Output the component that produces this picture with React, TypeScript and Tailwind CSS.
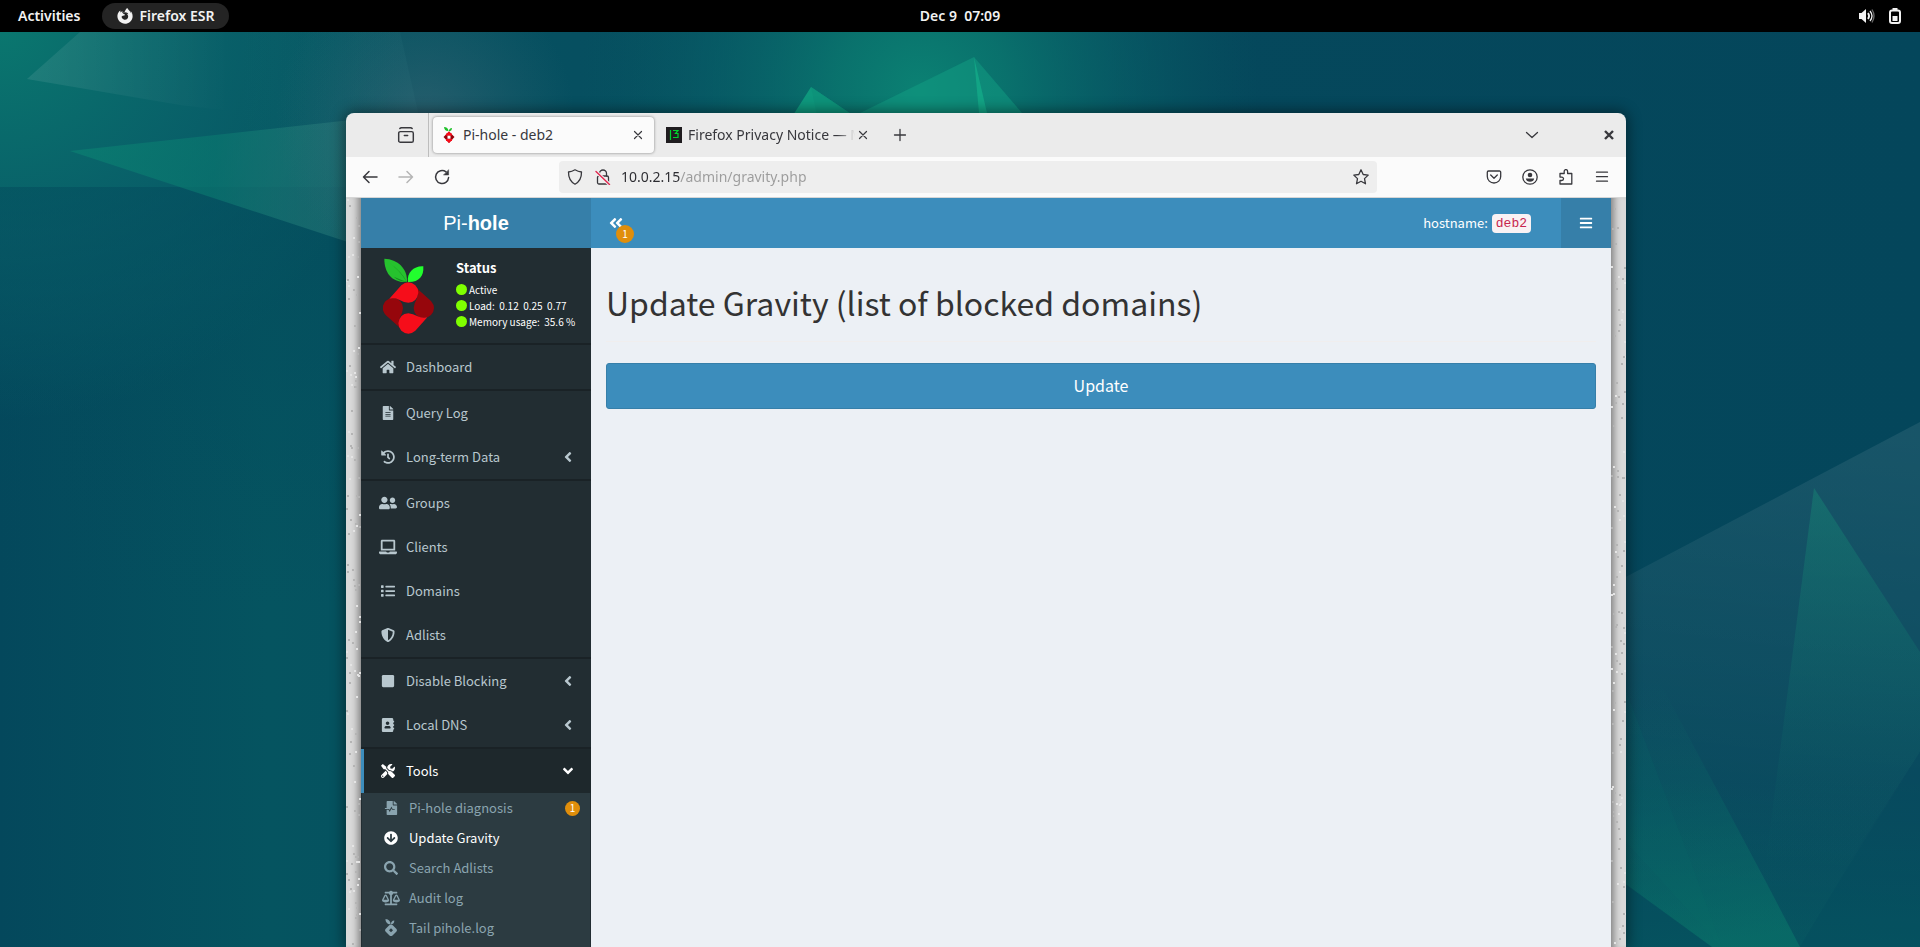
import type { ReactNode } from "react";
import {
  FaAddressBook,
  FaAngleDoubleLeft,
  FaAngleDown,
  FaAngleLeft,
  FaArrowCircleDown,
  FaBalanceScale,
  FaBars,
  FaFileAlt,
  FaFileMedicalAlt,
  FaFirefoxBrowser,
  FaHistory,
  FaHome,
  FaLaptop,
  FaList,
  FaSearch,
  FaShieldAlt,
  FaSquare,
  FaTools,
  FaUserFriends,
} from "react-icons/fa";

const LOBE =
  "M147 174 L183 134 Q204 116 225 134 Q234 143 234 156 Q230 185 204 186 Q190 185 176 177 Q163 171 147 174Z";

function Wallpaper() {
  return (
    <svg
      className="absolute inset-0 h-full w-full"
      viewBox="0 0 1920 947"
      preserveAspectRatio="xMidYMid slice"
      aria-hidden="true"
    >
      <defs>
        <linearGradient id="base" x1="0" x2="1" y1="0" y2="0">
          <stop offset="0" stopColor="#04485c" />
          <stop offset=".14" stopColor="#055460" />
          <stop offset=".3" stopColor="#064f60" />
          <stop offset=".62" stopColor="#05485c" />
          <stop offset="1" stopColor="#04465b" />
        </linearGradient>
        <radialGradient id="corner" gradientUnits="userSpaceOnUse" cx="0" cy="20" r="400">
          <stop offset="0" stopColor="#0a786f" />
          <stop offset=".55" stopColor="#09626a" stopOpacity=".85" />
          <stop offset="1" stopColor="#09606a" stopOpacity="0" />
        </radialGradient>
        <radialGradient id="glow" gradientUnits="userSpaceOnUse" cx="920" cy="90" r="340">
          <stop offset="0" stopColor="#0b8173" />
          <stop offset=".25" stopColor="#0a786f" stopOpacity=".85" />
          <stop offset=".65" stopColor="#08656a" stopOpacity=".45" />
          <stop offset="1" stopColor="#075a62" stopOpacity="0" />
        </radialGradient>
        <radialGradient id="haze" gradientUnits="userSpaceOnUse" cx="425" cy="120" r="150">
          <stop offset="0" stopColor="#5a7080" stopOpacity=".4" />
          <stop offset="1" stopColor="#40707c" stopOpacity="0" />
        </radialGradient>
        <linearGradient id="shard" gradientUnits="userSpaceOnUse" x1="27" y1="60" x2="230" y2="60">
          <stop offset="0" stopColor="#fff" stopOpacity=".09" />
          <stop offset="1" stopColor="#fff" stopOpacity="0" />
        </linearGradient>
        <linearGradient id="ray" gradientUnits="userSpaceOnUse" x1="240" y1="60" x2="410" y2="60">
          <stop offset="0" stopColor="#2a7c84" stopOpacity="0" />
          <stop offset="1" stopColor="#2a7c84" stopOpacity=".14" />
        </linearGradient>
        <linearGradient id="beam" gradientUnits="userSpaceOnUse" x1="70" y1="150" x2="360" y2="180">
          <stop offset="0" stopColor="#0b8072" stopOpacity=".7" />
          <stop offset=".5" stopColor="#0a7a70" stopOpacity=".6" />
          <stop offset="1" stopColor="#3a8a84" stopOpacity=".36" />
        </linearGradient>
        <linearGradient id="floor" x1="0" x2="0" y1="0" y2="1">
          <stop offset="0" stopColor="#034a5c" stopOpacity=".5" />
          <stop offset="1" stopColor="#034a5c" stopOpacity="0" />
        </linearGradient>
        <linearGradient id="veil" gradientUnits="userSpaceOnUse" x1="1840" y1="430" x2="1780" y2="947">
          <stop offset="0" stopColor="#fff" stopOpacity=".08" />
          <stop offset="1" stopColor="#fff" stopOpacity="0" />
        </linearGradient>
        <linearGradient id="spire" gradientUnits="userSpaceOnUse" x1="1814" y1="488" x2="1800" y2="870">
          <stop offset="0" stopColor="#178474" stopOpacity=".5" />
          <stop offset="1" stopColor="#0b6b68" stopOpacity="0" />
        </linearGradient>
        <linearGradient id="rise" gradientUnits="userSpaceOnUse" x1="1700" y1="947" x2="1650" y2="680">
          <stop offset="0" stopColor="#0a7d6c" stopOpacity=".5" />
          <stop offset="1" stopColor="#0a6b68" stopOpacity="0" />
        </linearGradient>
        <linearGradient id="ground" gradientUnits="userSpaceOnUse" x1="0" y1="947" x2="0" y2="780">
          <stop offset="0" stopColor="#0a6b68" stopOpacity=".4" />
          <stop offset="1" stopColor="#0a6b68" stopOpacity="0" />
        </linearGradient>
      </defs>
      <rect width="1920" height="947" fill="url(#base)" />
      <rect width="420" height="430" fill="url(#corner)" />
      <rect y="187" width="346" height="420" fill="url(#floor)" />
      <rect x="570" width="700" height="440" fill="url(#glow)" />
      <path d="M27 79 80 32H240V112L180 105Z" fill="url(#shard)" />
      <path d="M70 151 360 119V246Z" fill="url(#beam)" />
      <path d="M240 32H400L422 130H240Z" fill="url(#ray)" />
      <rect x="270" width="320" height="270" fill="url(#haze)" />
      <path d="M860 113 974 57 1022 113Z" fill="#12a083" opacity=".5" />
      <path d="M974 57 979 113H987Z" fill="#16b58d" opacity=".6" />
      <path d="M790 120 811 87 860 120Z" fill="#0fa080" opacity=".85" />
      <path d="M811 87 818 120H860Z" fill="#0d8f78" opacity=".6" />
      <path d="M1620 580 1920 422V947H1620Z" fill="url(#veil)" />
      <path d="M1814 488 1920 652V752L1840 875H1764Z" fill="url(#spire)" />
      <path d="M1620 780H1920V947H1620Z" fill="url(#ground)" />
      <path d="M1920 752 1840 880 1800 947H1920Z" fill="#044a5c" opacity=".3" />
      <path d="M1620 662 1650 664 1765 880 1800 947H1620Z" fill="url(#rise)" />
      <path d="M1620 675 1690 860 1722 947 1620 835Z" fill="#0a7468" opacity=".12" />
      <path d="M1620 880 1712 947H1620Z" fill="#03405a" opacity=".55" />
    </svg>
  );
}

function PiHoleLogo() {
  return (
    <svg viewBox="128 52 153 228" className="h-[76px] w-[51px]" aria-label="Pi-hole logo">
      <path d="M132 54C172 55 202 84 200 124C152 126 132 94 132 54Z" fill="#26c22e" />
      <path d="M146 66Q182 90 200 124Q176 122 160 108Q188 120 198 122Q176 86 146 66Z" fill="#158a20" />
      <path d="M249 77C222 75 198 96 203 124C236 125 251 108 249 77Z" fill="#22ff2e" />
      <path d={LOBE} fill="#96060c" transform="rotate(90 204 202)" />
      <path d={LOBE} fill="#96060c" transform="rotate(270 204 202)" />
      <path d={LOBE} fill="#f60d1a" />
      <path d={LOBE} fill="#f60d1a" transform="rotate(180 204 202)" />
    </svg>
  );
}

function PiHoleGlyph() {
  return (
    <svg viewBox="0 0 14 18" className="h-[18px] w-[14px]" fill="currentColor" aria-hidden="true">
      <path d="M1.500 0C5 .3 6.600 2.500 6.500 5.300 3.300 5.300 1.500 3.200 1.500 0ZM10.300 1.600C8 1.800 6.800 3.200 7 5.300 9.300 5.200 10.400 4 10.300 1.600Z" />
      <path
        fillRule="evenodd"
        d="M7 5.600Q8 5.600 9 6.600L12.500 10Q13.500 11.200 12.500 12.500L8.500 16.500Q7 17.600 5.500 16.500L1.500 12.500Q.5 11.200 1.500 10L5 6.600Q6 5.600 7 5.600ZM7 9.200 5 11.200 7 13.200 9 11.200Z"
      />
    </svg>
  );
}

function Stroke({ children, className = "size-4" }: { children: ReactNode; className?: string }) {
  return (
    <svg
      viewBox="0 0 16 16"
      className={className}
      fill="none"
      stroke="currentColor"
      strokeWidth="1.300"
      strokeLinecap="round"
      strokeLinejoin="round"
      aria-hidden="true"
    >
      {children}
    </svg>
  );
}

function TopBar() {
  return (
    <header className="relative grid h-8 grid-cols-[1fr_auto_1fr] items-center bg-black text-sm font-semibold text-[#f2f2f2]">
      <div className="flex items-center gap-[22px] pl-[18px]">
        <button>Activities</button>
        <button className="flex h-[26px] items-center gap-1.5 rounded-full bg-[#242424] px-[15px]">
          <FaFirefoxBrowser className="size-4" />
          Firefox ESR
        </button>
      </div>
      <button className="whitespace-pre">Dec 9  07:09</button>
      <div className="flex items-center justify-end gap-3 pr-[17px]">
        <button aria-label="Volume">
          <svg viewBox="0 0 16 16" className="size-4" aria-hidden="true">
            <path d="M0 5h2.500L7 1v14L2.500 11H0Z" fill="#f2f2f2" />
            <path d="M9 5q2.200 3 0 6" fill="none" stroke="#f2f2f2" strokeWidth="1.800" />
            <path d="M11 3q4 5 0 10" fill="none" stroke="#f2f2f2" strokeWidth="1.300" />
            <path d="M13 1.500q4 6.500 0 13" fill="none" stroke="#666" strokeWidth="1.400" />
          </svg>
        </button>
        <button aria-label="Battery">
          <svg viewBox="0 0 16 16" className="size-4" aria-hidden="true">
            <rect x="5.500" y="0" width="5" height="3" fill="#f2f2f2" />
            <rect x="3" y="2.500" width="10" height="12.500" rx="2" fill="none" stroke="#f2f2f2" strokeWidth="2" />
            <rect x="5.500" y="8" width="5" height="5" fill="#f2f2f2" />
          </svg>
        </button>
      </div>
    </header>
  );
}

function CloseIcon() {
  return (
    <Stroke className="size-4">
      <path d="m4.500 4.500 7 7M11.500 4.500 4.500 11.500" strokeWidth="1.200" />
    </Stroke>
  );
}

function TabStrip() {
  return (
    <div className="flex h-11 items-center bg-[#ebebeb] text-sm text-[#38383d]">
      <div className="flex h-full w-[83px] items-center justify-end border-r border-[#bdbdbd] pr-[13px]">
        <button aria-label="Recent browsing">
          <Stroke className="size-[18px]">
            <rect x="1.500" y="5" width="13" height="9.500" rx="1.500" />
            <path d="M2.500 2.200Q3 1.600 4 1.600H12Q13 1.600 13.500 2.200M6.500 8.500h3" />
          </Stroke>
        </button>
      </div>
      <div className="ml-1 flex h-9 w-[221px] items-center gap-1.5 rounded bg-[#fbfbfb] pr-2 pl-2 shadow-[0_0_3px_rgba(0,0,0,0.450)]">
        <svg viewBox="0 0 16 16" className="size-4" aria-hidden="true">
          <path d="M3 0Q7 0 7.500 4 3.500 4.500 3 0ZM11 1Q8 1 7.800 4.500 11 4 11 1Z" fill="#1fc22a" />
          <path d="M8 4.500 13.500 10 8 16 2.500 10Z" fill="#960008" />
          <path d="M8 4.500 11 7.500 8 9 4.500 8ZM8 16 5 13 8 11.500 11.500 12.500Z" fill="#f60d1a" />
          <path d="M5 6.500h6v2H5ZM5 12h6v2H5Z" fill="#f60d1a" />
          <rect x="6.500" y="8.700" width="3" height="3" fill="#fff" />
        </svg>
        <span className="flex-1">Pi-hole - deb2</span>
        <button aria-label="Close tab Pi-hole">
          <CloseIcon />
        </button>
      </div>
      <div className="ml-3 flex h-9 w-[205px] items-center">
        <svg viewBox="0 0 16 16" className="mr-1.5 size-4 shrink-0" aria-hidden="true">
          <rect width="16" height="16" fill="#1f1c1f" />
          <path d="M4.500 3v10M7 3.500h5L9.500 6.500H12V10.500H7" fill="none" stroke="#00d22e" strokeWidth="1.200" />
        </svg>
        <span className="min-w-0 flex-1 overflow-hidden whitespace-nowrap [mask-image:linear-gradient(to_left,transparent,#000_18px)]">
          Firefox Privacy Notice — M
        </span>
        <button aria-label="Close tab Firefox Privacy Notice">
          <CloseIcon />
        </button>
      </div>
      <button aria-label="New tab" className="ml-[21px]">
        <Stroke>
          <path d="M8 2.500v11M2.500 8h11" />
        </Stroke>
      </button>
      <div className="flex flex-1 items-center justify-end gap-[61px] pr-[9px]">
        <button aria-label="List all tabs">
          <Stroke>
            <path d="m2.500 5.500 5.500 5 5.500-5" />
          </Stroke>
        </button>
        <button aria-label="Close window">
          <Stroke>
            <path d="m4 4 8 8M12 4 4 12" strokeWidth="2.400" strokeLinecap="butt" />
          </Stroke>
        </button>
      </div>
    </div>
  );
}

function Toolbar() {
  return (
    <div className="flex h-[41px] items-center border-b border-[#d6d6d6] bg-[#fbfbfb] px-4 text-[#38383d]">
      <div className="flex w-[197px] shrink-0 gap-5">
        <button aria-label="Back">
          <Stroke>
            <path d="M15 8H1.500M7 2.500 1.500 8 7 13.500" strokeWidth="1.500" />
          </Stroke>
        </button>
        <button aria-label="Forward" className="text-[#b5b5b5]">
          <Stroke>
            <path d="M1 8H14.500M9 2.500 14.500 8 9 13.500" strokeWidth="1.500" />
          </Stroke>
        </button>
        <button aria-label="Reload">
          <Stroke>
            <path d="M14.600 8.500A6.500 6.500 0 1 1 12 2.800" strokeWidth="1.500" />
            <path d="M14.600 1V6H9.800Z" fill="currentColor" strokeWidth=".5" />
          </Stroke>
        </button>
      </div>
      <div className="flex h-8 min-w-0 flex-1 items-center rounded bg-[#eeeeee] px-2">
        <button aria-label="Tracking protection">
          <Stroke>
            <path d="M8 .8Q11 2.600 14.500 3 14.700 11.500 8 15.200 1.300 11.500 1.500 3 5 2.600 8 .8Z" />
          </Stroke>
        </button>
        <button aria-label="Connection not secure" className="ml-3">
          <Stroke>
            <path d="M4.500 7V4.500a3.500 3.500 0 0 1 7 0V7" />
            <rect x="2.500" y="7" width="11" height="8" rx="1.500" />
            <path d="m1 2.500 13.500 13" stroke="#eeeeee" strokeWidth="3.500" />
            <path d="m1 2.500 13.500 13" stroke="#e22850" strokeWidth="1.400" />
          </Stroke>
        </button>
        <input
          aria-label="Address"
          defaultValue="10.0.2.15/admin/gravity.php"
          className="ml-2.5 min-w-0 flex-1 bg-[linear-gradient(to_right,#2b2b30_59px,#9b9b9b_59px)] bg-clip-text text-sm text-transparent outline-none"
        />
        <button aria-label="Bookmark this page">
          <Stroke>
            <path d="m8 .8 2.200 4.700 5 .6-3.700 3.500 1 5.200L8 12.300l-4.500 2.500 1-5.200L.8 6.100l5-.6Z" />
          </Stroke>
        </button>
      </div>
      <div className="flex w-[233px] shrink-0 items-center justify-end gap-5">
        <button aria-label="Save to Pocket">
          <Stroke>
            <path d="M2.500 2h11a1.200 1.200 0 0 1 1.200 1.200V7.500a6.700 6.500 0 0 1-13.400 0V3.200A1.200 1.200 0 0 1 2.500 2ZM4.700 6 8 9.200 11.300 6" />
          </Stroke>
        </button>
        <button aria-label="Account">
          <Stroke>
            <circle cx="8" cy="8" r="7.200" />
            <circle cx="8" cy="6" r="2.300" fill="currentColor" stroke="none" />
            <path d="M3.800 9.500h8.400Q11.500 12.800 8 12.800T3.800 9.500Z" fill="currentColor" stroke="none" />
          </Stroke>
        </button>
        <button aria-label="Extensions">
          <Stroke>
            <path d="M6.200 4.500V2.300a1.700 1.700 0 0 1 3.400 0V4.500H13.800V15H2V11.500H3.800a1.700 1.700 0 0 0 0-3.400H2V4.500Z" />
          </Stroke>
        </button>
        <button aria-label="Application menu">
          <Stroke>
            <path d="M2.500 3.200h11M2.500 7.700h11M2.500 12.200h11" />
          </Stroke>
        </button>
      </div>
    </div>
  );
}

function Gutter({ side }: { side: "left" | "right" }) {
  let seed = side === "left" ? 7 : 23;
  const next = () => {
    seed = (seed * 16807) % 2147483647;
    return seed / 2147483647;
  };
  for (let i = 0; i < 8; i++) next();
  const specks = Array.from({ length: 115 }, () => ({
    x: Math.floor(next() * 14),
    y: Math.floor(next() * 750),
    light: next() > 0.6,
  }));
  return (
    <div
      className={
        side === "left"
          ? "relative w-[15px] shrink-0 overflow-hidden bg-[#d9d9d9] shadow-[inset_-8px_0_7px_-5px_rgba(0,0,0,0.400)]"
          : "relative w-[15px] shrink-0 overflow-hidden bg-[#d9d9d9] shadow-[inset_8px_0_7px_-5px_rgba(0,0,0,0.400)]"
      }
    >
      <svg className="absolute inset-0" width="15" height="750" aria-hidden="true">
        {specks.map((s, i) => (
          <rect key={i} x={s.x} y={s.y} width="2" height="2" fill={s.light ? "#e4e4e4" : "#b4b4b4"} />
        ))}
      </svg>
    </div>
  );
}

type Item = { label: string; icon: ReactNode; expandable?: boolean };

const GROUPS: Item[][] = [
  [{ label: "Dashboard", icon: <FaHome className="size-4" /> }],
  [
    { label: "Query Log", icon: <FaFileAlt /> },
    { label: "Long-term Data", icon: <FaHistory />, expandable: true },
  ],
  [
    { label: "Groups", icon: <FaUserFriends className="size-[18px]" /> },
    { label: "Clients", icon: <FaLaptop className="size-[18px]" /> },
    { label: "Domains", icon: <FaList /> },
    { label: "Adlists", icon: <FaShieldAlt /> },
  ],
  [
    { label: "Disable Blocking", icon: <FaSquare />, expandable: true },
    { label: "Local DNS", icon: <FaAddressBook />, expandable: true },
  ],
];

const TOOLS: { label: string; icon: ReactNode; active?: boolean; badge?: string }[] = [
  { label: "Pi-hole diagnosis", icon: <FaFileMedicalAlt />, badge: "1" },
  { label: "Update Gravity", icon: <FaArrowCircleDown />, active: true },
  { label: "Search Adlists", icon: <FaSearch /> },
  { label: "Audit log", icon: <FaBalanceScale className="size-[18px]" /> },
  { label: "Tail pihole.log", icon: <PiHoleGlyph /> },
];

function Status({ children }: { children: ReactNode }) {
  return (
    <p className="flex h-4 items-center gap-0.5 text-[10px] whitespace-pre">
      <span className="size-[11px] rounded-full bg-[#7fff00]" />
      {children}
    </p>
  );
}

function Sidebar() {
  return (
    <aside className="flex w-[230px] shrink-0 flex-col bg-[#222d32] text-[13px] text-[#b8c7ce]">
      <div className="flex h-[95px] gap-[22px] pt-2.5 pl-[22px] text-white">
        <PiHoleLogo />
        <div>
          <p className="mb-[3px] h-5 leading-5 font-bold">Status</p>
          <Status>Active</Status>
          <Status>{"Load:  0.12  0.25  0.77"}</Status>
          <Status>{"Memory usage:  35.6 %"}</Status>
        </div>
      </div>
      <nav className="flex flex-1 flex-col">
        {GROUPS.map((group) => (
          <ul key={group[0].label} className="border-t-2 border-[#1a2226]">
            {group.map((item) => (
              <li key={item.label}>
                <a href="#" className="flex h-11 items-center pr-[15px] pl-[18px]">
                  <span className="mr-[9px] flex w-[18px] justify-center text-sm">{item.icon}</span>
                  <span className="flex-1">{item.label}</span>
                  {item.expandable && <FaAngleLeft className="size-4" />}
                </a>
              </li>
            ))}
          </ul>
        ))}
        <div className="flex flex-1 flex-col border-t-2 border-[#1a2226]">
          <a
            href="#"
            className="flex h-11 shrink-0 items-center border-l-[3px] border-[#3c8dbc] bg-[#1e282c] pr-[15px] pl-[15px] text-white"
          >
            <span className="mr-[9px] flex w-[18px] justify-center text-sm">
              <FaTools />
            </span>
            <span className="flex-1">Tools</span>
            <FaAngleDown className="size-4" />
          </a>
          <ul className="mx-px flex-1 bg-[#2c3b41] text-[#8aa4af]">
            {TOOLS.map((item) => (
              <li key={item.label}>
                <a
                  href="#"
                  className={
                    item.active
                      ? "flex h-[30px] items-center pr-2.5 pl-5 text-white"
                      : "flex h-[30px] items-center pr-2.5 pl-5"
                  }
                >
                  <span className="mr-[9px] flex w-[18px] justify-center text-sm">{item.icon}</span>
                  <span className="flex-1">{item.label}</span>
                  {item.badge && (
                    <span className="flex size-[15px] items-center justify-center rounded-full bg-[#e08e0b] text-[10px] leading-none text-white">
                      {item.badge}
                    </span>
                  )}
                </a>
              </li>
            ))}
          </ul>
        </div>
      </nav>
    </aside>
  );
}

function AdminPage() {
  return (
    <div className="flex min-w-0 flex-1 flex-col font-['Noto_Sans_CJK_SC','Noto_Sans',sans-serif]">
      <header className="flex h-[50px] shrink-0 bg-[#3c8dbc] text-white">
        <a
          href="#"
          className="flex w-[230px] items-center justify-center bg-[#367fa9] font-['Liberation_Sans',sans-serif] text-xl"
        >
          <span>
            Pi-<b>hole</b>
          </span>
        </a>
        <button aria-label="Toggle navigation" className="relative px-[17px]">
          <FaAngleDoubleLeft className="size-4" />
          <span className="absolute top-[27px] left-[25px] flex size-[18px] items-center justify-center rounded-full bg-[#e08e0b] text-[10px] leading-none">
            1
          </span>
        </button>
        <div className="flex flex-1 items-center justify-end gap-1 pr-[30px] text-[13px]">
          hostname:
          <code className="rounded bg-[#f9f2f4] px-1 font-['Liberation_Mono',monospace] text-[13px] leading-[19px] text-[#c7254e]">
            deb2
          </code>
        </div>
        <button aria-label="Menu" className="flex w-[50px] items-center justify-center bg-[#367fa9]">
          <FaBars className="size-3.5" />
        </button>
      </header>
      <div className="flex flex-1">
        <Sidebar />
        <main className="min-w-0 flex-1 bg-[#ecf0f5] px-[15px] text-[#333]">
          <h1 className="border-b border-[#f0eeee] pt-[34px] pb-[19px] text-[32px] leading-10">
            Update Gravity (list of blocked domains)
          </h1>
          <button className="mt-[21px] h-[46px] w-full rounded-[3px] border border-[#367fa9] bg-[#3c8dbc] pb-0.5 text-base text-white">
            Update
          </button>
        </main>
      </div>
    </div>
  );
}

export default function App() {
  return (
    <div className="relative flex h-screen flex-col overflow-hidden bg-[#05485c] font-['Noto_Sans',sans-serif]">
      <Wallpaper />
      <TopBar />
      <section className="relative mt-[81px] mr-[294px] ml-[346px] flex flex-1 flex-col overflow-hidden rounded-t-lg shadow-[0_0_14px_2px_rgba(0,0,0,0.450)]">
        <TabStrip />
        <Toolbar />
        <div className="flex flex-1">
          <Gutter side="left" />
          <AdminPage />
          <Gutter side="right" />
        </div>
      </section>
    </div>
  );
}
